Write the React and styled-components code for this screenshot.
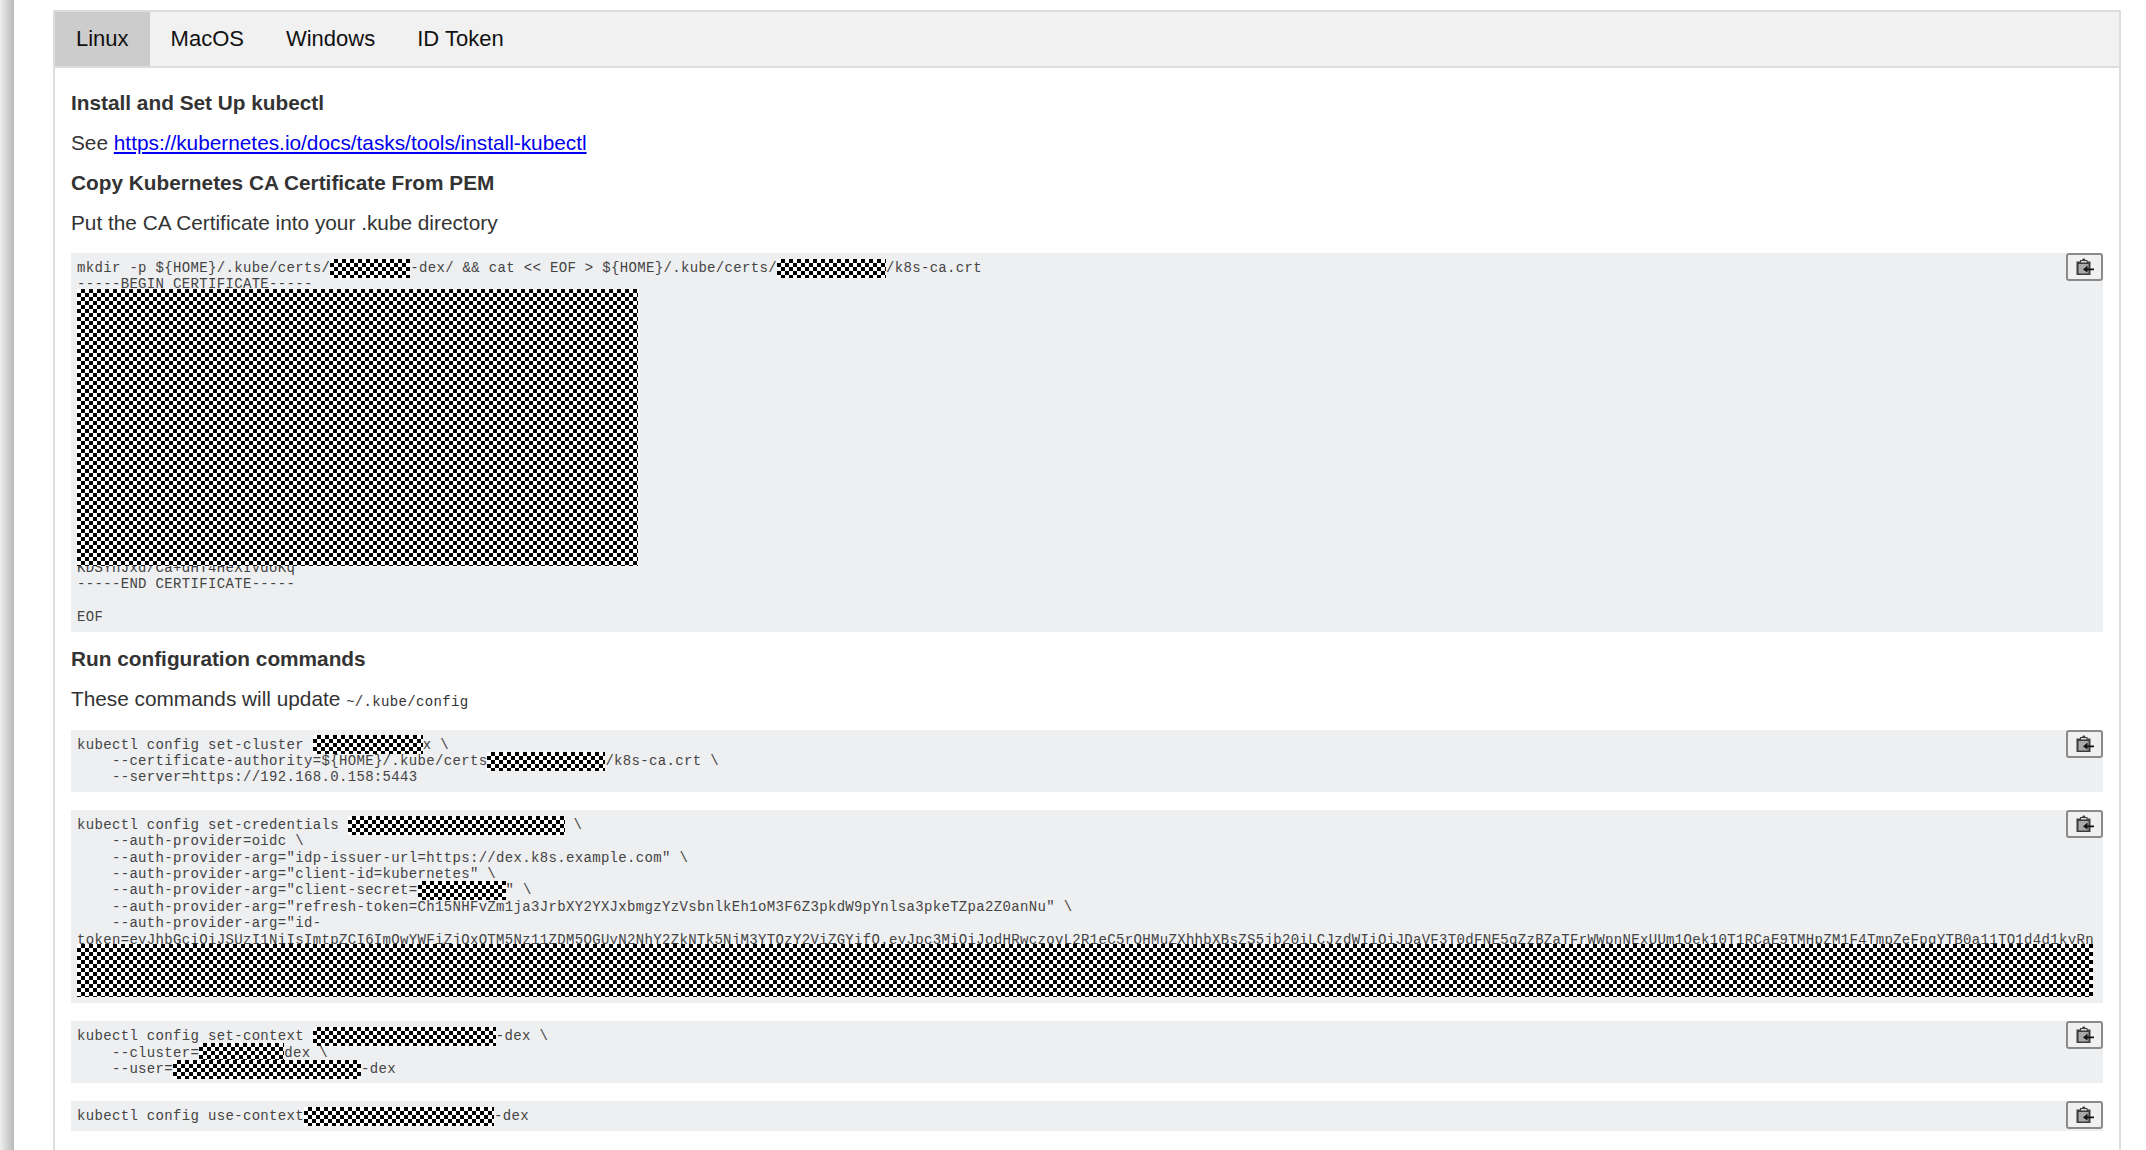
import React from 'react';
import styled, { createGlobalStyle, css } from 'styled-components';

const tabs = ['Linux', 'MacOS', 'Windows', 'ID Token'];

const token =
  'token=eyJhbGciOiJSUzI1NiIsImtpZCI6ImQwYWFiZjQxOTM5Nz11ZDM5OGUyN2NhY2ZkNTk5NjM3YTQzY2ViZGYifQ.eyJpc3MiOiJodHRwczovL2R1eC5rOHMuZXhhbXBsZS5jb20iLCJzdWIiOiJDaVF3T0dFNE5qZzBZaTFrWWpnNExUUm1Oek10T1RCaE9TMHpZM1F4TmpZeFpqYTB0a11TQ1d4d1kyRn';

export default function App() {
  return (
    <>
      <GlobalStyle />
      <Page>
        <Panel>
          <TabBar>
            {tabs.map((t, i) => (
              <Tab key={t} $active={i === 0}>{t}</Tab>
            ))}
          </TabBar>
          <Content>
            <Heading>Install and Set Up kubectl</Heading>
            <Para>
              See <Link href="#">https://kubernetes.io/docs/tasks/tools/install-kubectl</Link>
            </Para>
            <Heading>Copy Kubernetes CA Certificate From PEM</Heading>
            <Para $gap={18}>Put the CA Certificate into your .kube directory</Para>

            <Code>
              <CopyButton />
              <Line>mkdir -p ${'{HOME}'}/.kube/certs/<Redact $w={80} />-dex/ &amp;&amp; cat &lt;&lt; EOF &gt; ${'{HOME}'}/.kube/certs/<Redact $w={109} />/k8s-ca.crt</Line>
              <Line>-----BEGIN CERTIFICATE-----</Line>
              <RedactBlock $w={561} $h={277} />
              <ClippedLine>KDSYnJxd/Ca+dHT4HeXIVdoKq</ClippedLine>
              <Line>-----END CERTIFICATE-----</Line>
              <Line>&nbsp;</Line>
              <Line>EOF</Line>
            </Code>

            <Heading $afterCode>Run configuration commands</Heading>
            <Para $gap={16}>These commands will update <Inline>~/.kube/config</Inline></Para>

            <Code>
              <CopyButton />
              <Line>kubectl config set-cluster <Redact $w={110} />x \</Line>
              <Line>    --certificate-authority=${'{HOME}'}/.kube/certs<Redact $w={118} />/k8s-ca.crt \</Line>
              <Line>    --server=https://192.168.0.158:5443</Line>
            </Code>

            <Code>
              <CopyButton />
              <Line>kubectl config set-credentials <Redact $w={217} /> \</Line>
              <Line>    --auth-provider=oidc \</Line>
              <Line>    --auth-provider-arg="idp-issuer-url=https://dex.k8s.example.com" \</Line>
              <Line>    --auth-provider-arg="client-id=kubernetes" \</Line>
              <Line>    --auth-provider-arg="client-secret=<Redact $w={88} />" \</Line>
              <Line>    --auth-provider-arg="refresh-token=Ch15NHFvZm1ja3JrbXY2YXJxbmgzYzVsbnlkEh1oM3F6Z3pkdW9pYnlsa3pkeTZpa2Z0anNu" \</Line>
              <Line>    --auth-provider-arg="id-</Line>
              <Line $clip>{token}</Line>
              <RedactBlock $w={2016} $h={53} />
            </Code>

            <Code>
              <CopyButton />
              <Line>kubectl config set-context <Redact $w={183} />-dex \</Line>
              <Line>    --cluster=<Redact $w={85} />dex \</Line>
              <Line>    --user=<Redact $w={188} />-dex</Line>
            </Code>

            <Code>
              <CopyButton />
              <Line>kubectl config use-context<Redact $w={190} />-dex</Line>
            </Code>
          </Content>
        </Panel>
      </Page>
    </>
  );
}

function CopyButton() {
  return (
    <Button type="button">
      <svg width="20" height="18" viewBox="0 0 20 18">
        <path d="M1.5 3.5h3.5V2h2l1-1.5h1.5L10.5 2h2v1.5H15.5V17H1.5z" fill="#3d3d3d" />
        <path d="M6 3h5.5v1.5H6z" fill="#d8d8d8" />
        <path d="M3.5 6h10v9.5h-10z" fill="#a8a8a8" />
        <path d="M10 10.5h9v1.8h-9zM12.5 7.5v7L8 11.4z" fill="#111" />
      </svg>
    </Button>
  );
}

const GlobalStyle = createGlobalStyle`
  html, body {
    margin: 0;
    padding: 0;
    background: #fff;
  }
`;

const checker = css`
  background-color: #fff;
  background-image: conic-gradient(#000 25%, #fff 0 50%, #000 0 75%, #fff 0);
  background-size: 8px 8px;
`;

const Page = styled.div`
  box-sizing: border-box;
  height: 1150px;
  overflow: hidden;
  padding: 10px 25px 0 53px;
  font-family: "Liberation Sans", Arial, sans-serif;
  color: #333;
  background: linear-gradient(90deg, #eee 0, #b8b8b8 14px, #fff 14px);
`;

const Panel = styled.div`
  border: 2px solid #ddd;
  border-bottom: none;
  background: #fff;
  height: 1140px;
  overflow: hidden;
`;

const TabBar = styled.div`
  display: flex;
  height: 54px;
  background: #f1f1f1;
  border-bottom: 2px solid #ddd;
`;

const Tab = styled.div`
  display: flex;
  align-items: center;
  padding: 0 21px;
  font-size: 22px;
  color: #111;
  background: ${(p) => (p.$active ? '#ccc' : 'transparent')};
`;

const Content = styled.div`
  padding: 23px 16px 0 16px;
`;

const Heading = styled.div`
  font-size: 20.8px;
  font-weight: bold;
  line-height: 24px;
  margin-top: ${(p) => (p.$afterCode ? '-3px' : '0')};
  margin-bottom: 16px;
`;

const Para = styled.div`
  font-size: 20.8px;
  line-height: 24px;
  margin-bottom: ${(p) => p.$gap || 16}px;
`;

const Link = styled.a`
  color: #00e;
  text-decoration: underline;
`;

const Inline = styled.code`
  font-family: "Liberation Mono", monospace;
  font-size: 14px;
  letter-spacing: 0.33px;
`;

const Code = styled.div`
  position: relative;
  background: #eeeff1;
  padding: 7px 6px 6px;
  margin: 0 0 18px;
  font-family: "Liberation Mono", monospace;
  font-size: 14px;
  letter-spacing: 0.33px;
  line-height: 16.4px;
  color: #444;
`;

const Line = styled.div`
  white-space: pre;
  ${(p) => p.$clip && css`
    overflow: hidden;
    height: 16px;
  `}
`;

const ClippedLine = styled.div`
  height: 10px;
  overflow: hidden;
  display: flex;
  align-items: flex-end;
  white-space: pre;
`;

const Redact = styled.span`
  ${checker}
  display: inline-block;
  vertical-align: middle;
  height: 19px;
  margin: -3px 0;
  width: ${(p) => p.$w}px;
`;

const RedactBlock = styled.div`
  ${checker}
  width: ${(p) => p.$w}px;
  height: ${(p) => p.$h}px;
  margin-top: -3.5px;
  position: relative;
`;

const Button = styled.button`
  position: absolute;
  top: 0;
  right: 0;
  width: 37px;
  height: 28px;
  padding: 0;
  display: flex;
  align-items: center;
  justify-content: center;
  background: #f0f0f0;
  border: 2px solid #8a8a8a;
  border-radius: 3px;
`;
